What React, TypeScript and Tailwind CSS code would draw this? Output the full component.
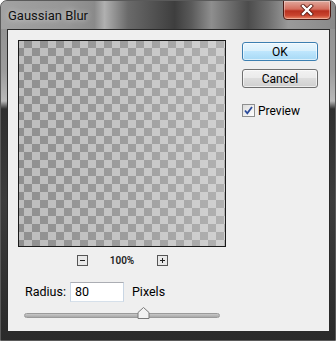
import React from "react";

export default function App() {
  return (
    <div
      className="w-[336px] h-[341px] rounded-t-[7px] flex flex-col overflow-hidden bg-[linear-gradient(180deg,#8e8e8e_0px,#9c9c9c_70px,#b9b9b9_100px,#2f2f2f_108px,#3c3c3c_200px,#2a2a2a_100%)] border border-[#5a5a5a]"
      style={{ fontFamily: "Roboto, 'Liberation Sans', Arial, sans-serif" }}
    >
      {/* title bar */}
      <div className="h-[28px] shrink-0 flex items-start justify-between bg-[linear-gradient(90deg,#a2a2a2_0%,#969696_20%,#8a8a8a_28%,#b0b0b0_31%,#6a6a6a_38%,#3e3e3e_52%,#5a5a5a_57%,#8e8e8e_63%,#4c4c4c_74%,#6e6e6e_80%,#9a9a9a_86%,#8a8a8a_100%)]">
        <span className="pl-[7px] pt-[7px] text-[13px] leading-[15px] text-[#111] [text-shadow:0_0_6px_rgba(255,255,255,0.7)]">
          Gaussian Blur
        </span>
        <div className="mr-[4px] mt-[-1px] w-[48px] h-[20px] rounded-b-[4px] border border-[#4a1a14] bg-[linear-gradient(180deg,#e0a89c_0%,#d46e5e_45%,#b8301f_55%,#c9442f_80%,#e98a6a_100%)] flex items-center justify-center shadow-[inset_0_0_0_1px_rgba(255,255,255,0.35)]">
          <svg width="14" height="12" viewBox="0 0 14 12">
            <path d="M3 2 L11 10 M11 2 L3 10" stroke="#5a1a10" strokeWidth="4" strokeLinecap="square" />
            <path d="M3 2 L11 10 M11 2 L3 10" stroke="#ffffff" strokeWidth="2.4" strokeLinecap="square" />
          </svg>
        </div>
      </div>

      {/* client area */}
      <div className="ml-[6px] mr-[5px] mb-[8px] flex-1 border border-[#2a2a2a] bg-[#efefef] flex flex-col pl-[10px] pt-[10px] text-[12px] text-black">
        <div className="flex">
          {/* preview */}
          <div className="w-[208px] h-[207px] border border-[#1a1a1a] bg-[conic-gradient(#8f8f8f_25%,#bdbdbd_0_50%,#8f8f8f_0_75%,#bdbdbd_0)] bg-[length:16px_16px] bg-[position:5px_7px]">
            <div className="w-full h-full bg-[linear-gradient(90deg,rgba(255,255,255,0)_0%,rgba(255,255,255,0.12)_50%,rgba(255,255,255,0.3)_100%)]" />
          </div>

          {/* buttons */}
          <div className="ml-[16px] pt-[2px] w-[76px] flex flex-col">
            <div className="h-[19px] rounded-[3px] border border-[#3c7fb1] bg-[linear-gradient(180deg,#eaf6fd_0%,#d9f0fc_45%,#bee6fd_50%,#a7d9f5_100%)] shadow-[inset_0_0_0_1px_rgba(255,255,255,0.6)] flex items-center justify-center leading-none">
              OK
            </div>
            <div className="mt-[8px] h-[19px] rounded-[3px] border border-[#707070] bg-[linear-gradient(180deg,#f2f2f2_0%,#ebebeb_45%,#dddddd_50%,#cfcfcf_100%)] shadow-[inset_0_0_0_1px_rgba(255,255,255,0.6)] flex items-center justify-center leading-none">
              Cancel
            </div>
            <div className="mt-[16px] flex items-center">
              <div className="w-[13px] h-[13px] border border-[#8e8f8f] bg-[linear-gradient(135deg,#dcdcdc,#ffffff)] flex items-center justify-center">
                <svg width="11" height="11" viewBox="0 0 11 11">
                  <path d="M2 5.5 L4.3 8.3 L9 2" fill="none" stroke="#2a4a9a" strokeWidth="1.8" />
                </svg>
              </div>
              <span className="ml-[3px] leading-none">Preview</span>
            </div>
          </div>
        </div>

        {/* zoom controls */}
        <div className="w-[208px] mt-[8px] flex items-center justify-center">
          <div className="w-[11px] h-[11px] border border-[#555] bg-[#e8e8e8] flex items-center justify-center">
            <div className="w-[5px] h-px bg-[#222]" />
          </div>
          <div className="w-[69px] text-center text-[10px] font-semibold leading-none text-[#222]">100%</div>
          <div className="w-[11px] h-[11px] border border-[#555] bg-[#e8e8e8] flex items-center justify-center relative">
            <div className="w-[5px] h-px bg-[#222]" />
            <div className="absolute w-px h-[5px] bg-[#222]" />
          </div>
        </div>

        {/* radius row */}
        <div className="mt-[16px] flex items-center pl-[7px] text-[12.5px]">
          <span className="leading-none">Radius:</span>
          <div className="ml-[4px] w-[54px] h-[20px] border border-[#abadb3] border-l-[#c9d6e4] border-r-[#c9d6e4] border-b-[#d6e0ea] bg-white flex items-center pl-[4px] leading-none">
            80
          </div>
          <span className="ml-[8px] leading-none">Pixels</span>
        </div>

        {/* slider */}
        <div className="mt-[5px] ml-[6px] w-[196px] h-[12px] flex items-end pb-[1px] relative">
          <div className="w-full h-[5px] rounded-[3px] border border-[#9a9a9a] bg-[linear-gradient(180deg,#c8c8c8,#a8a8a8)]" />
          <svg className="absolute left-[113px] top-0" width="13" height="12" viewBox="0 0 13 12">
            <path d="M6.5 0.5 L12 5.5 L12 11.5 L1 11.5 L1 5.5 Z" fill="#f2f2f2" stroke="#7a7a7a" />
          </svg>
        </div>
      </div>
    </div>
  );
}
